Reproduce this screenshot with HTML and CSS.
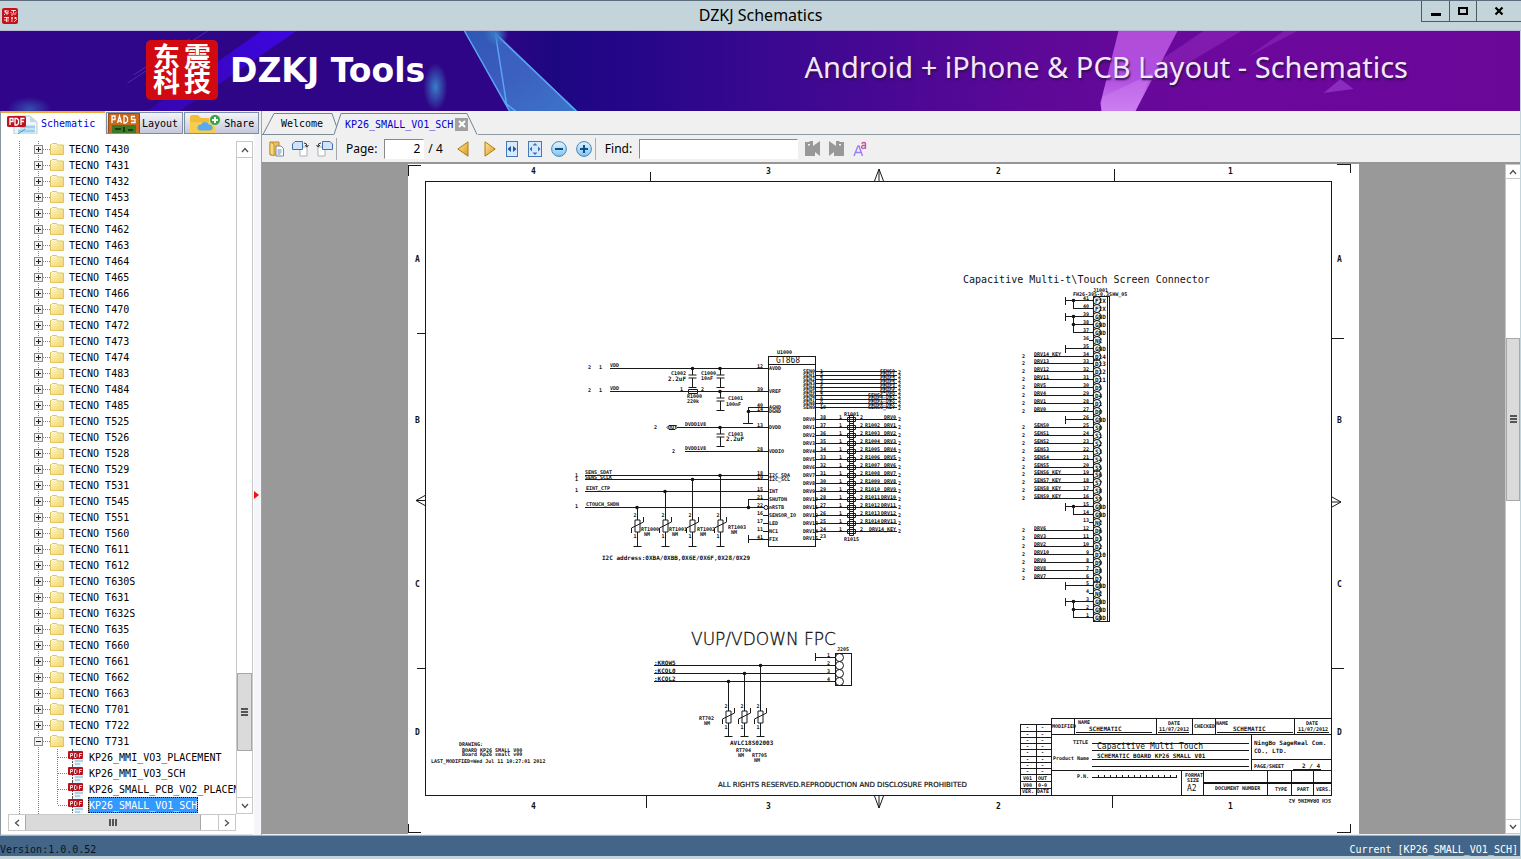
FILE: index.html
```html
<!DOCTYPE html>
<html lang="en">
<head>
<meta charset="utf-8">
<title>DZKJ Schematics</title>
<link rel="stylesheet" href="styles.css">
</head>
<body>
<svg class="defs" aria-hidden="true">
  <defs>
    <linearGradient id="gFolder" x1="0" y1="0" x2="1" y2="1"><stop offset="0" stop-color="#fff6c4"/><stop offset="1" stop-color="#f2d470"/></linearGradient>
    <linearGradient id="gGold" x1="0" y1="0" x2="1" y2="1"><stop offset="0" stop-color="#ffe79a"/><stop offset="1" stop-color="#d89a1c"/></linearGradient>
    <linearGradient id="gBlue" x1="0" y1="0" x2="0" y2="1"><stop offset="0" stop-color="#e4f5ff"/><stop offset="1" stop-color="#7cc4f2"/></linearGradient>
    <symbol id="folder" viewBox="0 0 14 14"><path d="M.5 2.500h1l1-1h4l1 1.500h6v9.500H.5z" fill="url(#gFolder)" stroke="#e2c25c"/><path d="M1.500 4V3h5" stroke="#fffbe0" fill="none"/></symbol>
    <symbol id="pdf" viewBox="0 0 16 16"><path d="M4.500 0v16" stroke="#555" stroke-dasharray="2 1"/><path d="M5 0h8l2 3v13H5z" fill="#eaf6fb"/><path d="M7 12h8M7 15h5" stroke="#a6d4ea" stroke-width="2"/><rect x="0" y="2" width="15" height="8" rx="1" fill="#b81420"/><path d="M2.500 8.500V4.500h2v2h-2M6.500 4.500v4h1.500l1-1v-2l-1-1zM11.500 8.500V4.500H14M11.500 6.500h2" stroke="#fff" stroke-width=".8" fill="none"/></symbol>
    <symbol id="up" viewBox="0 0 8 6"><path d="M1 5l3-3.500L7 5" fill="none" stroke="#505050" stroke-width="1.300"/></symbol>
    <symbol id="down" viewBox="0 0 8 6"><path d="M1 1l3 3.500L7 1" fill="none" stroke="#505050" stroke-width="1.300"/></symbol>
    <symbol id="left" viewBox="0 0 6 8"><path d="M5 1L1.500 4 5 7" fill="none" stroke="#505050" stroke-width="1.300"/></symbol>
    <symbol id="right" viewBox="0 0 6 8"><path d="M1 1l3.500 3L1 7" fill="none" stroke="#505050" stroke-width="1.300"/></symbol>
  </defs>
</svg>

<header class="titlebar">
  <span class="app-icon">
    <svg width="16" height="16" viewBox="0 0 16 16"><rect width="16" height="16" rx="2" fill="#c8101a"/><path d="M2 3h5M4 2L3 5h4M5 4v3M2 7l1-1M9 2.500h5M9 4v1M11.500 2v3M14 4v1M9 6h5M10 7v1M2 9.500h5M4.500 9v5M2 12h3M6 9v5M9 10h2M10 9v5M12 10h3M13.500 9v2M12 14l3-3" stroke="#fff" stroke-width=".8" fill="none"/></svg>
  </span>
  <h1 class="window-title">DZKJ Schematics</h1>
  <div class="window-buttons">
    <button class="wbtn" aria-label="Minimize"><svg width="12" height="12"><path d="M1 9.500h10" stroke="#000" stroke-width="3"/></svg></button>
    <button class="wbtn" aria-label="Maximize"><svg width="12" height="12"><rect x="2" y="3" width="8" height="6" fill="none" stroke="#000" stroke-width="2"/></svg></button>
    <button class="wbtn wide" aria-label="Close"><svg width="12" height="12"><path d="M2.500 2.500l7 7M9.500 2.500l-7 7" stroke="#000" stroke-width="2.200"/></svg></button>
  </div>
</header>

<section class="banner">
  <svg class="banner-art" viewBox="0 0 1521 80" preserveAspectRatio="xMidYMid slice" aria-hidden="true">
    <defs>
      <linearGradient id="bBase"><stop offset="0" stop-color="#30058a"/><stop offset=".33" stop-color="#2e0586"/><stop offset=".365" stop-color="#1d0780"/><stop offset=".42" stop-color="#26068a"/><stop offset=".5" stop-color="#380890"/><stop offset=".6" stop-color="#4c0894"/><stop offset=".68" stop-color="#5e0898"/><stop offset=".8" stop-color="#6c089c"/><stop offset="1" stop-color="#6a0698"/></linearGradient>
      <linearGradient id="bPrism" x1="0" y1="0" x2="1" y2="1"><stop offset="0" stop-color="#2f57b4"/><stop offset=".5" stop-color="#3d5cc0"/><stop offset="1" stop-color="#3fa0dc"/></linearGradient>
      <linearGradient id="bPink" x1="0" y1="0" x2="0" y2="1"><stop offset="0" stop-color="#b04cd8"/><stop offset=".6" stop-color="#b04fe0"/><stop offset="1" stop-color="#cc80f2"/></linearGradient>
      <radialGradient id="bGlow"><stop offset="0" stop-color="#3a7ec8"/><stop offset="1" stop-color="#3a7ec8" stop-opacity="0"/></radialGradient>
      <linearGradient id="bRay" x1="1" y1="0" x2="0" y2="1"><stop offset="0" stop-color="#3c06e0"/><stop offset="1" stop-color="#3606b0"/></linearGradient>
    </defs>
    <rect width="1521" height="80" fill="url(#bBase)"/>
    <path d="M262 0h35L180 80h-32z" fill="url(#bRay)"/>
    <path d="M208 0L128 52M190 8L134 44" stroke="#5a45d0" opacity=".6"/>
    <ellipse cx="30" cy="78" rx="22" ry="12" fill="url(#bGlow)" opacity=".6"/>
    <ellipse cx="436" cy="56" rx="12" ry="24" fill="url(#bGlow)"/>
    <path d="M465 0h30l82 80h-67z" fill="url(#bPrism)"/>
    <path d="M497 4l12 73 10 3h56z" fill="#3c62c0" opacity=".7"/>
    <path d="M465 0l45 80M496 3l11 70 9 7M496 3l81 77" stroke="#5aa4f4" stroke-width="1.500" fill="none"/>
    <circle cx="497" cy="3" r="12" fill="url(#bGlow)"/>
    <path d="M1204 0h38l-70 42-72 28z" fill="#8a22b8" opacity=".7"/>
    <path d="M1284 0h14l-50 26z" fill="#8624b0" opacity=".7"/>
    <path d="M1119 0h59l-42 80h-34l-1-8z" fill="url(#bPink)"/>
    <path d="M1103 66l50-24-17 38h-34z" fill="#cc7cf0" opacity=".5"/>
    <path d="M1341 48l13 10-30 4z" fill="#8a2cc0"/>
  </svg>
  <div class="brand">
    <svg class="logo" width="72" height="60" viewBox="0 0 72 60"><rect width="72" height="60" rx="5" fill="#d00a10"/><g class="seal"><text x="7" y="27">东</text><text x="38" y="27">震</text><text x="7" y="52">科</text><text x="38" y="52">技</text></g></svg>
    <span class="brand-name">DZKJ Tools</span>
  </div>
  <p class="slogan">Android + iPhone &amp; PCB Layout - Schematics</p>
</section>

<main class="work">
  <aside class="side">
    <div class="side-tabs" role="tablist">
      <button class="stab active" role="tab" aria-selected="true">
        <svg width="34" height="20" viewBox="0 0 34 20"><path d="M8 2h16l7 6v12H8z" fill="#eef4fa" stroke="#b8cbdc"/><path d="M24 2l7 6h-7z" fill="#c6d8e6"/><path d="M14 13h15M12 17h17" stroke="#9cd0e8" stroke-width="3"/><path d="M12 20l7-5" stroke="#4a9ac8"/><rect x="1" y="2" width="19" height="11" rx="1.500" fill="#bc1420"/><path d="M4 11V4.500h3v3H4M9 4.500h2l1.500 1.500v3.500L11 11H9zM15 11V4.500h3.500M15 7.500h3" stroke="#fff" stroke-width="1.300" fill="none"/></svg>Schematic</button>
      <button class="stab" role="tab" aria-selected="false">
        <svg width="32" height="20" viewBox="0 0 32 20"><rect x=".5" y=".5" width="31" height="20" fill="#c8681c" stroke="#9a4c10"/><rect x="4" y="12" width="24" height="8" fill="#3c7a28"/><path d="M7 16h6M16 14v5M20 17h5" stroke="#1c3c14" stroke-width="2"/><path d="M4 10V3h3v3.500H4M9.500 10L11.500 3l2 7M10 8h3M16 3v7h1.500L19.500 8.500v-4L17.500 3zM27 3.500h-3.500v3H27v3h-4" stroke="#fff" stroke-width="1.300" fill="none"/></svg>Layout</button>
      <button class="stab" role="tab" aria-selected="false">
        <svg width="34" height="20" viewBox="0 0 34 20"><path d="M2 4q0-2 2-2h6l3 3h12q2 0 2 2v13H2z" fill="#f2bc34"/><path d="M2 9h25v11H2z" fill="#f8cc4c"/><path d="M12 17.500a3 3 0 0 1 1-6 4.500 4.500 0 0 1 8 0 3 3 0 0 1 1 6z" fill="#5aaaf0"/><circle cx="27" cy="7" r="5.500" fill="#3ca048" stroke="#fff" stroke-width=".6"/><path d="M27 4v6M24 7h6" stroke="#fff" stroke-width="2"/></svg>Share</button>
    </div>
    <div class="tree-box">
      <ul class="tree" id="tree" role="tree"></ul>
      <div class="vscroll">
        <button class="sbtn" aria-label="Scroll up"><svg width="8" height="6"><use href="#up"/></svg></button>
        <div class="gap-top"></div>
        <div class="thumb"><span class="grip"></span></div>
        <div class="gap-bottom"></div>
        <button class="sbtn" aria-label="Scroll down"><svg width="8" height="6"><use href="#down"/></svg></button>
      </div>
      <div class="hscroll">
        <button class="sbtn" aria-label="Scroll left"><svg width="6" height="8"><use href="#left"/></svg></button>
        <div class="thumb"><span class="grip side-grip"></span></div>
        <div class="gap-right"></div>
        <button class="sbtn" aria-label="Scroll right"><svg width="6" height="8"><use href="#right"/></svg></button>
      </div>
    </div>
  </aside>
  <div class="splitter"><svg width="5" height="8"><path d="M0 0l5 4-5 4z" fill="#f01010"/></svg></div>

  <section class="doc">
    <div class="doc-tabs" role="tablist">
      <button class="dtab welcome" role="tab" aria-selected="false"><svg class="tab-edge" width="80" height="22"><path d="M0 21.500h1L12 .5h58l7 20" fill="none" stroke="#6f8494"/></svg><span>Welcome</span></button>
      <div class="dtab open"><svg class="tab-edge" width="144" height="22"><path d="M0 21.500L7 .5h126l10 21" fill="#f0f0f0" stroke="#6f8494"/></svg><button class="tab-name" role="tab" aria-selected="true">KP26_SMALL_VO1_SCH</button><button class="tab-close" aria-label="Close tab"><svg width="8" height="8"><path d="M1 1l6 6M7 1L1 7" stroke="#fff" stroke-width="2"/></svg></button></div>
      <div class="tab-rest"></div>
    </div>
    <div class="toolbar">
      <button class="tool" aria-label="Copy page"><svg width="16" height="16"><path d="M1 1h9v13H1z" fill="#f0c050" stroke="#c08a28"/><path d="M1 1l4 2v12l-4-2z" fill="#f8d880" stroke="#c89434"/><path d="M7 5h5l2.500 2.500V15H7z" fill="#fff" stroke="#7c8896"/><path d="M8.500 9h4M8.500 11h4M8.500 13h3" stroke="#5c86b8"/></svg></button>
      <button class="tool rotate" aria-label="Rotate right"><svg width="17" height="16"><path d="M8 6h7v9H8z" fill="#fff" stroke="#a8b0b8"/><path d="M.5 3L3 .5h7.500v8H.5z" fill="#cfe4fa" stroke="#4470a8"/><path d="M12 2q3 0 3 3M13 4l2 2 1.500-2" stroke="#333" fill="none"/></svg></button>
      <button class="tool rotate" aria-label="Rotate left"><svg width="17" height="16"><path d="M2 6h7v9H2z" fill="#fff" stroke="#a8b0b8"/><path d="M6.500 .5H14L16.500 3v5.500h-10z" fill="#cfe4fa" stroke="#4470a8"/><path d="M5 2Q2 2 2 5M.5 4L2 6l2-2" stroke="#333" fill="none"/></svg></button>
      <span class="sep"></span>
      <label class="lbl" for="page">Page:</label>
      <input class="page-no" id="page" type="text" value="2">
      <span class="total">/ 4</span>
      <button class="tool prev" aria-label="Previous page"><svg width="12" height="16"><path d="M11 .8v14.400L.8 8z" fill="url(#gGold)" stroke="#b07c14"/></svg></button>
      <button class="tool" aria-label="Next page"><svg width="12" height="16"><path d="M1 .8v14.400L11.200 8z" fill="url(#gGold)" stroke="#b07c14"/></svg></button>
      <button class="tool fit" aria-label="Fit width"><svg width="12" height="16"><rect x=".5" y=".5" width="11" height="15" fill="#d6eaff" stroke="#4478b8"/><path d="M5 5v6L1.500 8zM7 5v6l3.500-3z" fill="#1c58a0"/></svg></button>
      <button class="tool fit" aria-label="Fit page"><svg width="14" height="16"><rect x=".5" y=".5" width="13" height="15" fill="#d6eaff" stroke="#4478b8"/><path d="M7 2l2.500 2.500h-5zM7 14l2.500-2.500h-5zM1.500 8L4 5.500v5zM12.500 8L10 5.500v5z" fill="#3c70b0"/></svg></button>
      <button class="tool" aria-label="Zoom out"><svg width="16" height="16"><circle cx="8" cy="8" r="7.400" fill="url(#gBlue)" stroke="#4d86b4"/><path d="M4 8h8" stroke="#0c5288" stroke-width="2"/></svg></button>
      <button class="tool" aria-label="Zoom in"><svg width="16" height="16"><circle cx="8" cy="8" r="7.400" fill="url(#gBlue)" stroke="#4d86b4"/><path d="M4 8h8M8 4v8" stroke="#0c5288" stroke-width="2"/></svg></button>
      <span class="sep warm"></span>
      <label class="lbl" for="find">Find:</label>
      <input class="find" id="find" type="text">
      <button class="tool" aria-label="Find previous"><svg width="15" height="16"><path d="M0 1h4l1-1h3v5l7-5v15l-5-4v4H0zM3 3v1.500h2V3z" fill="#989898" fill-rule="evenodd"/></svg></button>
      <button class="tool" aria-label="Find next"><svg width="15" height="16"><path d="M15 1h-4l-1-1H7v5L0 0v15l5-4v4h10zM12 3v1.500h-2V3z" fill="#989898" fill-rule="evenodd"/></svg></button>
      <button class="tool" aria-label="Match case"><svg width="14" height="16"><path d="M1 15L5 5h1l3.500 10M2.500 11.500h6" fill="none" stroke="#9a80f0" stroke-width="1.400"/><path d="M8.500 2.500q3-2 4 0V8M12.500 4.500h-3q-2 1.500 0 3 2 0 3-1.500" fill="none" stroke="#d048a8" stroke-width="1.300"/></svg></button>
    </div>
    <div class="viewer">
      <div class="canvas"><svg class="sheet" id="sheet" width="951" height="671" viewBox="408 164 951 671" role="img" aria-label="Schematic sheet 2 of 4"></svg></div>
      <div class="vscroll docscroll">
        <button class="sbtn" aria-label="Page up"><svg width="8" height="6"><use href="#up"/></svg></button>
        <div class="gap-top"></div>
        <div class="thumb"><span class="grip"></span></div>
        <div class="gap-bottom"></div>
        <button class="sbtn" aria-label="Page down"><svg width="8" height="6"><use href="#down"/></svg></button>
      </div>
    </div>
  </section>
</main>

<footer class="status"><span>Version:1.0.0.52</span><span class="current">Current [KP26_SMALL_VO1_SCH]</span></footer>
<script src="app.js"></script>
</body>
</html>
```
FILE: styles.css
```css
* { box-sizing: border-box; }
body {
  margin: 0;
  height: 100vh;
  display: flex;
  flex-direction: column;
  overflow: hidden;
  background: #c3d5db;
  color: #000;
  font-family: "Noto Sans", sans-serif;
  font-size: 12px;
}
button { margin: 0; padding: 0; border: 0; background: none; font: inherit; color: inherit; }
svg { display: block; flex: none; }
.defs { position: absolute; width: 0; height: 0; }

/* window frame */
.titlebar {
  flex: none;
  display: grid;
  grid-template-columns: 1fr auto 1fr;
  align-items: center;
  height: 31px;
  background: #c3d5db;
  border-top: 1px solid #5b6c7c;
  border-bottom: 1px solid #b9b8d8;
}
.app-icon { padding-left: 2px; }
.window-title { margin: 0; font-size: 16px; font-weight: 400; line-height: 26px; padding-bottom: 2px; }
.window-buttons { justify-self: end; align-self: start; display: flex; border: 1px solid #4e5a60; border-top: 0; border-right: 0; }
.wbtn { width: 27px; height: 20px; display: flex; align-items: center; justify-content: center; }
.wbtn + .wbtn { border-left: 1px solid #4e5a60; }
.wbtn.wide { width: 45px; }

/* banner */
.banner {
  flex: none;
  position: relative;
  display: flex;
  align-items: center;
  justify-content: space-between;
  height: 80px;
  margin-right: 1px;
  padding: 0 112px 0 146px;
  color: #fff;
  background: #30058a;
}
.banner-art { position: absolute; inset: 0; width: 100%; height: 100%; }
.brand { position: relative; display: flex; align-items: center; gap: 12px; padding-bottom: 2px; }
.logo { overflow: visible; }
.seal { fill: #fff; font: 700 27px "Noto Sans CJK SC", sans-serif; }
.brand-name { font: 700 33px "DejaVu Sans", sans-serif; }
.slogan { position: relative; margin: 0; padding-bottom: 10px; font: 400 29px "Noto Sans", sans-serif; color: #f4e6ff; text-shadow: 1px 2px 2px #30104c; white-space: nowrap; }

/* work area */
.work { flex: 1; min-height: 0; display: grid; grid-template-columns: 253px 9px 1fr; margin-right: 1px; background: #f0f0f0; }
.side { display: flex; flex-direction: column; min-height: 0; border-left: 1px solid #8a98a2; }
.side-tabs { flex: none; display: flex; align-items: flex-end; height: 23px; width: 260px; gap: 1px; position: relative; background: #f0f0f0; font-family: "DejaVu Sans Mono", monospace; font-size: 10px; }
.stab { display: flex; align-items: center; gap: 2px; height: 22px; padding: 0 4px 0 1px; border: 1px solid #7c8ea4; background: linear-gradient(#f4f4f8, #c4c8dc); }
.stab.active { width: 104px; height: 23px; padding: 0 5px; gap: 1px; border: 0; border-top: 2px solid #f0a830; background: #fff; color: #0000e0; }
.stab:last-child { padding: 0 4px 0 3px; }
.tree-box { flex: 1; min-height: 0; display: grid; grid-template: 1fr 17px / 1fr 17px; padding: 7px 0 3px 7px; background: #fff; border-bottom: 1px solid #e0e0e0; }
.tree { margin: 0; padding: 0; list-style: none; overflow: hidden; font-family: "DejaVu Sans Mono", monospace; font-size: 10px; }
.row { display: flex; align-items: center; gap: 4px; height: 16px; white-space: nowrap; }
.row button { height: 16px; padding: 0 1px; line-height: 15px; }
.row .picked { background: #3399ff; color: #fff; outline: 1px dotted #201000; outline-offset: -1px; }
.vscroll { display: flex; flex-direction: column; border-left: 1px solid #c8c8c8; border-right: 1px solid #c8c8c8; background: #fff; }
.sbtn { flex: none; display: flex; align-items: center; justify-content: center; }
.vscroll .sbtn { height: 17px; border: 1px solid #c8c8c8; border-width: 1px 0; }
.thumb { display: flex; align-items: center; justify-content: center; background: #dadada; border: 1px solid #a8a8a8; }
.vscroll .thumb { flex: 76; }
.vscroll .gap-top { flex: 515; }
.vscroll .gap-bottom { flex: 46; }
.grip { width: 7px; height: 8px; background: repeating-linear-gradient(#555 0 2px, transparent 2px 3px); }
.side-grip { width: 8px; height: 7px; background: repeating-linear-gradient(90deg, #555 0 2px, transparent 2px 3px); }
.hscroll { display: flex; grid-column: 1; border: 1px solid #c8c8c8; }
.hscroll .sbtn { width: 16px; }
.hscroll .thumb { flex: 176; border-width: 0 1px; }
.hscroll .gap-right { flex: 17; border-right: 1px solid #c8c8c8; }
.splitter { display: flex; align-items: center; padding: 44px 0 0 1px; border-right: 1px solid #9aa4ac; background: linear-gradient(90deg, #fff 0 1px, #f4f6fa 1px); }

/* document tabs */
.doc { display: flex; flex-direction: column; min-width: 0; min-height: 0; }
.doc-tabs { flex: none; display: flex; height: 24px; padding-top: 2px; font-family: "DejaVu Sans Mono", monospace; font-size: 10px; }
.dtab { position: relative; display: flex; align-items: center; height: 22px; flex: none; }
.dtab > :not(.tab-edge) { position: relative; }
.tab-edge { position: absolute; left: 0; top: 0; }
.welcome { width: 72px; padding-left: 19px; border-bottom: 1px solid #7f8c94; }
.open { width: 144px; padding-left: 11px; gap: 2px; color: #0000d8; }
.tab-close { width: 13px; height: 13px; display: flex; align-items: center; justify-content: center; background: #a0a0a0; }
.tab-rest { flex: 1; border-bottom: 1px solid #8f9aa0; }

/* toolbar */
.toolbar { flex: none; display: flex; align-items: center; gap: 9px; height: 27px; padding-left: 7px; }
.tool { display: flex; align-items: center; justify-content: center; }
.rotate { margin-left: -2px; }
.sep { width: 1px; height: 22px; margin-left: -6px; background: #a8a8a8; }
.sep.warm { background: #c0a8a0; }
.lbl { margin-right: -2px; }
.page-no, .find { height: 20px; border: 1px solid; border-color: #888 #fff #fff #888; border-radius: 0; background: #fff; font: 12px "Noto Sans", sans-serif; }
.page-no { width: 40px; padding: 0 3px; text-align: right; }
.total { margin-left: -5px; }
.prev { margin: 0 6px 0 5px; }
.fit { margin-left: 1px; }
.find { width: 159px; margin-right: -2px; }

/* viewer */
.viewer { flex: 1; min-height: 0; display: flex; border-top: 2px solid #969696; background: #999; margin-bottom: 1px; }
.canvas { flex: 1; min-width: 0; overflow: hidden; display: flex; justify-content: center; align-items: flex-start; }
.sheet { background: #fff; }
.docscroll { width: 15px; border-right: 0; }
.docscroll .sbtn { height: 15px; }
.docscroll .gap-top { flex: 160; }
.docscroll .thumb { flex: 161; }
.docscroll .gap-bottom { flex: 320; }

.sheet text { font-family: "DejaVu Sans Mono", monospace; fill: #111; }
.sheet .t5 { font-size: 5px; font-weight: 700; }
.sheet .t6 { font-size: 6px; font-weight: 700; }
.sheet .t7 { font-size: 7px; font-family: "DejaVu Sans", sans-serif; stroke: #111; stroke-width: .2px; }
.sheet .t8 { font-size: 8px; }
.sheet .t10 { font-size: 10px; }
.sheet .t17 { font-size: 17px; font-family: "DejaVu Sans", sans-serif; font-weight: 200; stroke: #111; stroke-width: .3px; }
.sheet .end { text-anchor: end; }
.sheet .mark { font-weight: 700; }
.wire { fill: none; stroke: #1a1a1a; stroke-width: 1; shape-rendering: crispEdges; }
.bold-wire { fill: none; stroke: #111; stroke-width: 2; }
.part { fill: none; stroke: #1a1a1a; }
.dot { fill: #111; }

/* status */
.status { flex: none; display: flex; justify-content: space-between; align-items: flex-end; height: 21px; margin: 0 1px 3px 0; padding: 0 2px 0 0; border-top: 1px solid #9fb4c6; background: #436688; color: #0a1420; font-family: "DejaVu Sans Mono", monospace; font-size: 10px; line-height: 13px; }
.current { color: #fff; }
```
FILE: app.js
```js
/* ---- file tree ---- */
const models = ('T430 T431 T432 T453 T454 T462 T463 T464 T465 T466 T470 T472 T473 T474 T483 T484 T485 ' +
  'T525 T526 T528 T529 T531 T545 T551 T560 T611 T612 T630S T631 T632S T635 T660 T661 T662 T663 T701 T722 T731').split(' ');
const files = ['KP26_MMI_VO3_PLACEMENT', 'KP26_MMI_VO3_SCH', 'KP26_SMALL_PCB_VO2_PLACEMENT', 'KP26_SMALL_VO1_SCH'];
const dots = 'stroke="#808080" stroke-dasharray="1 1"';
const folderRow = (label, open) => `<li class="row" role="treeitem"><svg width="56" height="16"><path d="M11.5 0v16M30.5 0v16M35 8.500h7" ${dots}/>` +
  `<rect x="26.500" y="4.500" width="8" height="8" fill="#f2f2f2" stroke="#8a8a8a"/><path d="M28 8.500h5${open ? '' : 'M30.500 6v5'}" stroke="#222"/>` +
  `<use href="#folder" x="42" y="1" width="14" height="14"/></svg>${label ? `<button>${label}</button>` : ''}</li>`;
const fileRow = (label, last) => `<li class="row" role="treeitem"><svg width="76" height="16"><path d="M11.5 0v16M30.5 0v16M49.5 0v${last ? 8 : 16}M50 8.500h10" ${dots}/>` +
  `<use href="#pdf" x="60" y="0" width="16" height="16"/></svg><button class="${last ? 'picked' : ''}">${label}</button></li>`;
document.getElementById('tree').innerHTML =
  models.map(m => folderRow('TECNO ' + m, m === 'T731')).join('') +
  files.map((f, i) => fileRow(f, i === 3)).join('') + folderRow('', false);

/* ---- schematic sheet ---- */
const out = [];
const wire = d => out.push(`<path class="wire" d="${d}"/>`);
const part = d => out.push(`<path class="part" d="${d}"/>`);
const text = (x, y, s, cls = 't5') => out.push(`<text class="${cls}" x="${x}" y="${y}">${s}</text>`);
const dot = (x, y) => out.push(`<circle class="dot" cx="${x}" cy="${y}" r="1.800"/>`);
const ring = (x, y, r) => out.push(`<circle class="part" cx="${x}" cy="${y}" r="${r}"/>`);

/* frame, zone marks */
wire('M425.500 181.500H1331.500V795.500H425.500z');
wire('M408.500 176V165.500H421M1337 164.500h13.500V173M408.500 824v8.500H421M1337 832.500h13.500V824');
wire('M650.500 172v9M1114.500 169v12M646.500 796v12M1112.500 796v12M417 333.500h8M417 668.500h8M1332 338.500h12M1332 668.500h12');
part('M874.500 181l4.500-12 4.500 12M879 169v12M874.500 796l4.500 12 4.500-12M879 796v12M425 495.500l-9 5 9 5M416 500.500h9M1332 497l9 5-9 5M1332 502h9');
[[4, 531], [3, 766], [2, 996], [1, 1228]].forEach(([n, x]) => { text(x, 174, n, 't8 mark'); text(x, 809, n, 't8 mark'); });
[['A', 262], ['B', 423], ['C', 587], ['D', 735]].forEach(([n, y]) => { text(415, y, n, 't8 mark'); text(1337, y, n, 't8 mark'); });

/* touch controller */
wire('M768.500 356.500H815.500V546.500H768.500zM768 364.500h47');
text(777, 354, 'U1000'); text(776, 363, 'GT868', 't8');
wire('M610 368.500H768M610 391.500H768M748 407.500H768M748 411.500H768M748.500 407v16M743 423.500h10M677 427.500H768M685 451.500H768M585 475.500H768M585 479.500H768M585 491.500H768M748 499.500H768M748.500 499v8M585 507.500H764M748 539.500H768M748.500 535v8M763 515.500h5M763 523.500h5M763 531.500h5');
ring(766, 507.5, 2);
[[12, 368, 'AVDD'], [39, 391, 'VREF'], [40, 407, 'AGND'], [14, 411, 'DGND'], [13, 427, 'DVDD'], [28, 451, 'VDDIO'], [18, 475, 'I2C_SDA'], [19, 479, 'I2C_SCL'], [15, 491, 'INT'], [21, 499, 'SHUTDN'], [22, 507, 'nRSTB'], [16, 515, 'SENSOR_IO'], [17, 523, 'LED'], [11, 531, 'NC1'], [41, 539, 'FIX']]
  .forEach(([n, y, s]) => { text(763, y, n, 't5 end'); text(769, y + 2, s); });
text(610, 367, 'VDD'); text(610, 390, 'VDD'); text(685, 426, 'DVDD1V8'); text(685, 450, 'DVDD1V8');
text(585, 474, 'SENS_SDAT'); text(585, 479, 'SENS_SCLK'); text(586, 490, 'EINT_CTP'); text(586, 506, 'CTOUCH_SHDN');
[368, 391].forEach(y => { text(588, y + 1, '2'); text(599, y + 1, '1'); });
text(654, 429, '2'); text(672, 453, '2');
[477, 481, 492, 508].forEach(y => text(575, y, '1'));
part('M667 427.500l2-2h6l2 2-2 2h-6z'); text(668, 429, 'OUT');
[[720, 427], [720, 475], [692.5, 479], [665, 491], [637, 507], [692.5, 368], [720, 368], [720, 391], [748.5, 411], [748.5, 507]].forEach(p => dot(p[0], p[1] + .5));
const cap = (x, y) => part(`M${x} ${y}v6.500M${x - 4} ${y + 6.500}h8M${x - 4} ${y + 9.500}h8M${x} ${y + 9.500}v9.500M${x - 4} ${y + 19}h8`);
cap(692.5, 368.5); cap(720.5, 368.5); cap(720.5, 391.5); cap(720.5, 427.5);
text(671, 375, 'C1002'); text(668, 381, '2.2uF', 't6'); text(701, 375, 'C1000'); text(701, 380, '10nF');
text(728, 400, 'C1001'); text(726, 406, '100nF'); text(728, 436, 'C1003'); text(726, 441, '2.2uF', 't6');
part('M688.500 389.500h9v4h-9z'); text(680, 391, '1'); text(701, 391, '2'); text(687, 398, 'R1000'); text(687, 403, '220k');
const varistor = (x, top, mid, base) => {
  part(`M${x} ${top}V${mid - 6}M${x} ${mid + 6}V${base}M${x - 2.500} ${mid - 6}h5v12h-5zM${x - 6} ${mid + 7}v-5l12-6v-5M${x - 4} ${base}h8`);
  text(x - 4, mid - 9, '2'); text(x - 4, mid + 12, '1');
};
varistor(637.5, 507, 526, 546.5); varistor(665.5, 491, 526, 546.5); varistor(692.5, 479, 526, 546.5); varistor(720.5, 475, 526, 546.5);
[[641, 1000], [669, 1001], [697, 1002], [728, 1003]].forEach(([x, n]) => { const y = n === 1003 ? 529 : 531; text(x, y, 'RT' + n); text(x + 3, y + 5, 'NM'); });
text(602, 560, 'I2C address:0XBA/0XBB,0X6E/0X6F,0X28/0X29', 't6');
for (let i = 0; i < 10; i++) {
  const y = 371.5 + i * 4;
  wire(`M816 ${y}H897`); text(803, y + 1, 'SEN' + i); text(820, y + 1, i + 1); text(898, y + 2, '2');
  text(895, y + 1, i < 6 ? 'SENS' + i : `SENS${i}_KEY`, 't5 end');
}
for (let i = 0; i < 15; i++) {
  const y = 419.5 + i * 8;
  wire(`M816 ${y}H897`); text(803, y + 1, 'DRV' + i); text(820, y - 1, 38 - i); text(839, y - 1, 1); text(860, y - 1, 2); text(898, y + 1, '2');
  part(`M847.500 ${y - 2}h8v4h-8zM849.500 ${y - 4}h4v8h-4z`);
  if (i > 0 && i < 14) text(865, y - 1, 'R10' + String(i + 1).padStart(2, '0'));
  text(896, y - 1, i === 14 ? 'DRV14_KEY' : 'DRV' + i, 't5 end');
}
wire('M816 539.500h5'); text(803, 540, 'DRV15'); text(820, 538, 23); text(844, 416, 'R1001'); text(844, 541, 'R1015');

/* touch panel connector */
text(963, 283, 'Capacitive Multi-t\\Touch Screen Connector', 't10');
text(1093, 292, 'J1001'); text(1073, 296, 'FH26-39S-0.3SHW_05');
wire('M1093.500 296.500H1109.500V621.500H1093.500zM1107.500 297V621');
const nets = { 34: 'DRV14_KEY', 33: 'DRV13', 32: 'DRV12', 31: 'DRV11', 30: 'DRV5', 29: 'DRV4', 28: 'DRV1', 27: 'DRV0', 25: 'SENS0', 24: 'SENS1', 23: 'SENS2', 22: 'SENS3', 21: 'SENS4', 20: 'SENS5', 19: 'SENS6_KEY', 18: 'SENS7_KEY', 17: 'SENS8_KEY', 16: 'SENS9_KEY', 12: 'DRV6', 11: 'DRV3', 10: 'DRV2', 9: 'DRV10', 8: 'DRV9', 7: 'DRV8', 6: 'DRV7' };
const bars = [41, 39, 35, 26, 15, 5, 3], joins = [41, 39, 38, 15, 3, 2], ends = [40, 37, 14, 1], open = [36, 13, 4];
for (let n = 41; n > 0; n--) {
  const y = Math.round(300 + (41 - n) * 7.93) + .5, net = nets[n];
  ring(1097, y, 4);
  text(1089, y - 1, n, 't5 end');
  if (net) { wire(`M1034 ${y}H1093`); text(1034, y - 1, net); text(1022, y + 1, '2'); }
  if (bars.includes(n)) wire(`M1065.500 ${y - 4}v8M1065 ${y}H1093`);
  if (joins.includes(n)) { dot(1073.5, y); wire(`M1073.500 ${y}v8M1073 ${y}H1093`); }
  if (ends.includes(n)) wire(`M1073 ${y}H1093`);
  if (open.includes(n)) wire(`M1089 ${y}H1093`);
  const name = net ? net.replace('DRV', 'D').replace('SENS', 'S').replace('_KEY', '') : n > 39 ? 'FIX' : open.includes(n) ? 'NC' : 'GND';
  text(1095, y + 2, name, 't6');
}

/* volume key connector */
text(691, 645, 'VUP/VDOWN FPC', 't17'); text(837, 651, 'J205');
wire('M835.500 653.500H851.500V685.500H835.500zM815.500 653v8M815 657.500h20M654 665.500H835M654 673.500H835M654 681.500H835');
[657.5, 665.5, 673.5, 681.5].forEach((y, i) => { ring(839.5, y, 4); text(827, y - 1, i + 1); });
text(654, 665, ':KROW5', 't6'); text(654, 673, ':KCOL0', 't6'); text(654, 681, ':KCOL2', 't6');
dot(760.5, 665.5); dot(744.5, 673.5); dot(728.5, 681.5);
varistor(760.5, 665, 717, 736.5); varistor(744.5, 673, 717, 736.5); varistor(728.5, 681, 717, 736.5);
text(699, 720, 'RT702'); text(704, 725, 'NM'); text(730, 745, 'AVLC18S02003', 't6');
text(736, 752, 'RT704'); text(738, 757, 'NM'); text(752, 757, 'RT705'); text(754, 762, 'NM');
text(718, 787, 'ALL RIGHTS RESERVED.REPRODUCTION AND DISCLOSURE PROHIBITED', 't7');
text(459, 746, 'DRAWING:'); text(462, 752, 'BOARD KP26 SMALL V00'); text(462, 756, 'Board Kp26 small v00');
text(431, 763, 'LAST_MODIFIED=Wed Jul 11 10:27:01 2012');

/* title block */
wire('M1051.500 795V718.500H1331M1051 734.500H1331M1051 770.500H1331M1074.500 718v16M1156.500 718v16M1192.500 718v16M1215.500 718v16M1294.500 718v16');
wire('M1251.500 735v35M1251 759.500h80M1181.500 770v25M1203.500 770v25M1267.500 770v25M1291.500 770v25M1313.500 770v25');
wire('M1076 732.500h76M1158 732.500h31M1217 732.500h76M1297 732.500h32M1092 743.500h157M1092 750.500h157M1092 759.500h157M1092 766.500h157M1092 777.500h85M1293 769.500h28');
for (let x = 1098; x < 1177; x += 6) wire(`M${x}.5 775v3`);
out.push('<path class="bold-wire" d="M1204 783h127"/>');
const rows = [724, 731, 737, 743, 749, 756, 762, 768, 774, 781, 788];
rows.forEach((y, i) => { wire(`M1020 ${y}.5h31`); if (i < 8) { text(1026, y + 5, '-'); text(1041, y + 5, '-'); } });
wire('M1020.500 724v71M1036.500 724v71');
text(1023, 780, 'V01'); text(1038, 780, 'OUT'); text(1023, 787, 'V00'); text(1038, 787, '0-0'); text(1022, 793, 'VER.'); text(1037, 793, 'DATE');
text(1052, 728, 'MODIFIED'); text(1078, 724, 'NAME'); text(1089, 731, 'SCHEMATIC', 't6'); text(1168, 725, 'DATE'); text(1159, 731, '11/07/2012');
text(1194, 728, 'CHECKED'); text(1216, 725, 'NAME'); text(1233, 731, 'SCHEMATIC', 't6'); text(1306, 725, 'DATE'); text(1298, 731, '11/07/2012');
text(1073, 744, 'TITLE'); text(1097, 749, 'Capacitive Multi Touch', 't8'); text(1053, 760, 'Product Name'); text(1097, 758, 'SCHEMATIC BOARD KP26 SMALL V01', 't6');
text(1254, 745, 'NingBo SageReal Com.', 't6'); text(1254, 753, 'CO., LTD.', 't6'); text(1254, 768, 'PAGE/SHEET'); text(1302, 768, '2 / 4', 't6');
text(1077, 778, 'P.N.'); text(1185, 777, 'FORMAT'); text(1187, 782, 'SIZE'); text(1187, 791, 'A2', 't8');
text(1215, 790, 'DOCUMENT NUMBER'); text(1275, 791, 'TYPE'); text(1297, 791, 'PART'); text(1316, 791, 'VERS.');
out.push('<text class="t5" transform="rotate(180 1309 801)" x="1287" y="803">SCH DRAWING A2</text>');
document.getElementById('sheet').innerHTML = out.join('');
```
